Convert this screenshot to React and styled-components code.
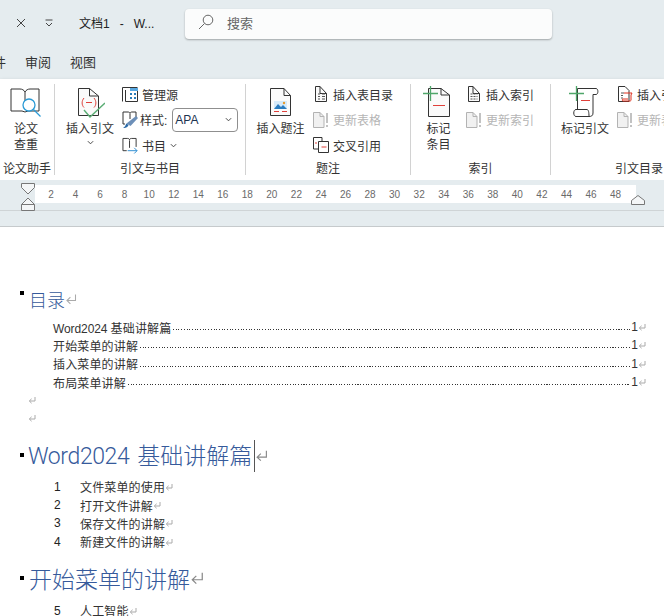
import styled, { createGlobalStyle } from "styled-components";

const GlobalStyle = createGlobalStyle`
  html, body { margin: 0; padding: 0; background: #fff; }
  body { font-family: "Liberation Sans", "Noto Sans CJK SC", sans-serif; }
`;

const Window = styled.div`
  width: 664px;
  height: 616px;
  overflow: hidden;
  background: #fff;
  color: #262626;
`;

const TitleBar = styled.div`
  height: 46px;
  background: #e5ecef;
  display: flex;
  align-items: center;
  padding-left: 15px;
  box-sizing: border-box;
`;

const QuickBtn = styled.span`
  width: ${(p) => p.$w}px;
  display: flex;
`;

const DocTitle = styled.span`
  width: 106px;
  flex: none;
  padding-bottom: 2px;
  font-size: 12px;
  white-space: pre;
  color: #222;
`;

const SearchBox = styled.div`
  width: 367px;
  height: 30px;
  margin-top: 2px;
  padding: 0 0 4px 13px;
  background: #fbfcfc;
  border-radius: 4px;
  box-shadow: 0 1px 2px rgba(0, 0, 0, 0.3);
  display: flex;
  align-items: center;
  gap: 13px;
  box-sizing: border-box;
  font-size: 13px;
  color: #666;
`;

const Tabs = styled.div`
  height: 33px;
  padding-bottom: 2px;
  box-sizing: border-box;
  background: #e5ecef;
  display: flex;
  align-items: center;
  gap: 19px;
  margin-left: -20px;
  font-size: 13px;
  color: #333;
`;

const Ribbon = styled.div`
  position: relative;
  height: 101px;
  background: #fff;
  display: flex;
  box-shadow: 0 2px 4px rgba(0, 0, 0, 0.25);
`;

const Group = styled.div`
  flex: none;
  width: ${(p) => p.$w}px;
  box-sizing: border-box;
  margin: 5px 0;
  height: 91px;
  border-right: ${(p) => (p.$last ? "none" : "1px solid #d2d2d2")};
  display: flex;
  flex-direction: column;
`;

const GroupBody = styled.div`
  height: 79px;
  display: flex;
  padding-left: ${(p) => p.$pad || 0}px;
`;

const GroupLabel = styled.div`
  font-size: 12px;
  line-height: 12px;
  text-align: center;
  white-space: nowrap;
  color: #333;
`;

const LargeBtn = styled.div`
  flex: none;
  width: ${(p) => p.$w}px;
  display: flex;
  flex-direction: column;
  align-items: center;
  padding-top: 4px;
  font-size: 12px;
  line-height: 16px;
  text-align: center;
  color: #333;
  svg { display: block; }
`;

const LargeIcon = styled.div`
  height: ${(p) => (p.$up ? 32 : 30)}px;
  margin: ${(p) => (p.$up ? -2 : 0)}px 0 3px;
`;

const BtnChevron = styled.span`
  margin-top: 2px;
`;

const SmallCol = styled.div`
  display: flex;
  flex-direction: column;
  gap: 3.7px;
  margin-top: -1px;
`;

const SmallRow = styled.div`
  height: 22px;
  display: flex;
  align-items: center;
  gap: ${(p) => p.$gap ?? 4}px;
  font-size: 12px;
  white-space: nowrap;
  color: ${(p) => (p.$off ? "#b5b5b5" : "#333")};
`;

const SmallIcon = styled.span`
  width: 16px;
  height: 18px;
  display: flex;
  align-items: center;
  justify-content: center;
  flex: none;
`;

const StyleSelect = styled.div`
  width: 66px;
  height: 24px;
  margin: 1px 0 0 3px;
  box-sizing: border-box;
  border: 1px solid #8f8f8f;
  border-radius: 4px;
  display: flex;
  align-items: center;
  justify-content: space-between;
  padding: 0 5px 1px 2px;
  font-size: 12px;
  color: #1c3350;
`;

const RulerArea = styled.div`
  position: relative;
  height: 31px;
  background: #e5ecef;
  padding-top: 5px;
  box-sizing: border-box;
  border-bottom: 1px solid #cfd4d6;
`;

const RulerTrack = styled.div`
  width: 601px;
  height: 18px;
  margin-left: 35px;
  background: #fff;
  display: flex;
  align-items: center;
  padding-left: 3.7px;
  box-sizing: border-box;
`;

const RulerNum = styled.span`
  flex: none;
  width: 24.55px;
  text-align: center;
  font-size: 10px;
  color: #6a6a6a;
`;

const LeftMarker = styled.svg`
  position: absolute;
  left: 21px;
  top: 3px;
`;

const RightMarker = styled.svg`
  position: absolute;
  left: 631px;
  top: 15px;
`;

const RulerGap = styled.div`
  height: 15px;
  background: #e5ecef;
  border-bottom: 1px solid #c6cacc;
`;

const Page = styled.div`
  padding: 60px 0 0 20px;
  color: #333;
`;

const Heading = styled.div`
  display: flex;
  align-items: center;
  height: ${(p) => p.$h}px;
  margin-top: ${(p) => p.$mt || 0}px;
  font-size: ${(p) => p.$size}px;
  color: #365a9b;
  font-weight: 300;
  white-space: nowrap;
`;

const Bullet = styled.span`
  flex: none;
  align-self: flex-start;
  width: 4px;
  height: 4px;
  background: #000;
  margin: ${(p) => p.$top}px ${(p) => p.$gap}px 0 0;
`;

const Caret = styled.span`
  width: 1px;
  height: 32px;
  background: #555;
  margin: 0 0 0 2px;
`;

const HeadingText = styled.span`
  padding-bottom: 3px;
`;

const HeadingLatin = styled.span`
  font-family: Roboto, "Liberation Sans", sans-serif;
  font-weight: 300;
  letter-spacing: -0.4px;
  margin-right: 8px;
`;

const TocLatin = styled.span`
  letter-spacing: -0.1px;
`;

const TocList = styled.div`
  margin: 7px 0 -0.6px 33px;
`;

const TocRow = styled.div`
  height: 18.3px;
  display: flex;
  align-items: center;
  padding-right: 18px;
  font-size: 12px;
  letter-spacing: 0.15px;
  white-space: nowrap;
`;

const Leader = styled.span`
  flex: 1;
  height: 1px;
  margin: 5px 1px 0 2px;
  background: repeating-linear-gradient(90deg, #333 0 1px, transparent 1px 2.7px);
`;

const Blank = styled.div`
  height: 18.5px;
  display: flex;
  align-items: center;
  padding-left: 8px;
`;

const NumList = styled.div`
  margin: ${(p) => p.$mt}px 0 0 34px;
`;

const NumRow = styled.div`
  height: 18.3px;
  display: flex;
  align-items: center;
  font-size: 12px;
  letter-spacing: 0.15px;
  white-space: nowrap;
`;

const NumIndex = styled.span`
  width: 26px;
  flex: none;
  color: #222;
`;

const Mark = styled.svg`
  flex: none;
`;

const ReturnMark = ({ size = 8, color = "#aaa" }) => (
  <Mark width={size} height={size} viewBox="0 0 8 8" fill="none" stroke={color} strokeWidth={size > 10 ? 0.7 : 1}>
    <path d="M7 1v4H1.500M3.600 2.800 1.300 5l2.300 2.200" />
  </Mark>
);

const Chevron = ({ size = 7, color = "#444" }) => (
  <svg width={size} height={size} viewBox="0 0 8 8" fill="none" stroke={color} strokeWidth="1.1">
    <path d="M1 2.500 4 5.500 7 2.500" />
  </svg>
);

const Doc = ({ w = 21, h = 28, children, stroke = "#333", fill = "#fafafa" }) => (
  <svg width={w} height={h} viewBox={`0 0 ${w} ${h}`} fill="none">
    <path d={`M.5.5H${w - 7}L${w - 0.5} 7.500V${h - 0.5}H.5Z`} fill={fill} stroke={stroke} />
    <path d={`M${w - 7} .5V7.500H${w - 0.5}`} stroke={stroke} />
    {children}
  </svg>
);

const BookSearchIcon = () => (
  <svg width="32" height="30" viewBox="0 0 32 30" fill="none">
    <path d="M1 1h9c2 0 4 1 5 3 1-2 3-3 5-3h9v22H18l-3 1-3-1H1Z" fill="#fff" stroke="#333" />
    <path d="M15 4v10" stroke="#333" />
    <circle cx="19" cy="17" r="6" fill="#fff" stroke="#2a9ad6" strokeWidth="1.300" />
    <path d="m23.500 21.500 7 7" stroke="#2a9ad6" strokeWidth="1.200" />
  </svg>
);

const CiteIcon = () => (
  <svg width="30" height="30" viewBox="-3 0 30 30" fill="none">
    <path d="M.5.5H11.500L20.500 8V27.500H.5Z" fill="#fafafa" stroke="#333" />
    <path d="M11.500 .5V8H20.500" stroke="#333" />
    <path d="M6 10c-2.500 3-2.500 7 0 9.500M16 10c2.500 3 2.500 7 0 9.500M8 14.500h6" stroke="#e0403a" />
    <path d="m6 22 6 7L27 15" stroke="#5aad74" strokeWidth="1.400" />
  </svg>
);

const SourcesIcon = () => (
  <svg width="16" height="15" viewBox="0 0 16 15" fill="none">
    <path d="M.5 14.500V.5h15" stroke="#333" />
    <path d="M3.500 14.500H9M3.500 3V14.500" stroke="#333" />
    <path d="M8 1h8v3H8Z" fill="#59a8e0" />
    <path d="M15.500 4v10.500H9" stroke="#333" />
    <path d="M8 6h2v2H8ZM8 10h2v2H8ZM12 6h2v2h-2ZM12 10h2v2h-2Z" fill="#2b7cb8" />
  </svg>
);

const BrushIcon = () => (
  <svg width="16" height="18" viewBox="0 0 16 18" fill="none">
    <path d="M1 1h5c1 0 2 .5 2 1.500C8 1.500 9 1 10 1h4v5M8 3v5M1 1v12h2" stroke="#333" />
    <path d="M4.500 12.500 14 5l2 2-7.500 8Z" fill="#6c8fb8" />
    <path d="M1 17c2 0 5-.5 5.500-3l-2-1.500c-1 1-1 3.500-3.500 4.500Z" fill="#2a6aa8" />
  </svg>
);

const BibIcon = () => (
  <svg width="17" height="17" viewBox="0 0 17 17" fill="none">
    <path d="M1 1h5c1 0 2 .5 2 1.500C8 1.500 9 1 10 1h5v9M8 3v8M1 1v13h4" stroke="#333" />
    <path d="M6 14h10M13 11l3 3-3 3" stroke="#2a8bd0" />
  </svg>
);

const CaptionIcon = () => (
  <Doc>
    <path d="M4 13h13v8H4Z" fill="#d6eafa" />
    <path d="m4 21 4-5 3 3 2-2 4 4Z" fill="#2a7cc0" />
    <circle cx="14" cy="15" r="1.200" fill="#e89a2c" />
    <path d="M4 23.500h5M12 23.500h5" stroke="#e0403a" />
  </Doc>
);

const TableListIcon = () => (
  <Doc w={12} h={16}>
    <path d="M3 8h2M7 8h3M3 10.500h2M7 10.500h3M3 13h2M7 13h3" stroke="#555" />
  </Doc>
);

const UpdateIcon = () => (
  <svg width="16" height="16" viewBox="0 0 16 16" fill="none">
    <path d="M.5.5H7L11 4.500V15.500H.5Z" fill="#f1f1f1" stroke="#b3b3b3" />
    <path d="M7 .5V4.500H11" stroke="#b3b3b3" />
    <path d="M14 1v10M14 13v2" stroke="#b3b3b3" strokeWidth="1.600" />
  </svg>
);

const CrossRefIcon = () => (
  <svg width="16" height="16" viewBox="0 0 16 16" fill="none">
    <path d="M5 12H.5V.5H9V4" stroke="#333" />
    <path d="M5.500 4.500H15.500V15.500H5.500Z" fill="#fff" stroke="#333" />
    <path d="M8.500 10h5M2 6h2" stroke="#e0403a" />
  </svg>
);

const MarkEntryIcon = () => (
  <svg width="31" height="32" viewBox="0 0 31 32" fill="none">
    <path d="M5.500 2.500H18L26.500 9V30.500H5.500Z" fill="#fafafa" stroke="#333" />
    <path d="M18 2.500V9H26.500" stroke="#333" />
    <path d="M10 19.500h12" stroke="#e0403a" />
    <path d="M0 7.500h15M7.500 0v15" stroke="#4fa66a" strokeWidth="1.300" />
  </svg>
);

const IndexIcon = () => (
  <Doc w={12} h={16}>
    <path d="M2.500 8H9.500M2.500 10.500H9.500M2.500 13H9.500" stroke="#555" strokeDasharray="2 1" />
  </Doc>
);

const ScrollIcon = () => (
  <svg width="32" height="32" viewBox="0 0 32 32" fill="none">
    <path d="M8.500 2.500H27c2.500 0 2.500 6 0 6h-3V27c0 3-2 3.500-4 3.500H7c-3 0-3-7 0-7h11c1.500 0 2 3 2 7M8.500 2.500V23.500" stroke="#333" fill="#fff" />
    <path d="M12 14.500h9" stroke="#e0403a" />
    <path d="M0 7.500h15M7.500 0v15" stroke="#4fa66a" strokeWidth="1.300" />
  </svg>
);

const TocaIcon = () => (
  <svg width="15" height="16" viewBox="0 0 15 16" fill="none">
    <path d="M.5.5H7L11 4.500V15.500H.5Z" fill="#fff" stroke="#333" />
    <path d="M3 7h3M3 9.500h2M3 12h2" stroke="#555" />
    <path d="M6 7h8l-1 2v5c0 1-1 1-1 1H5c-1 0-1-2 0-2h5" stroke="#e0301e" />
  </svg>
);

const rulerNums = Array.from({ length: 24 }, (_, i) => (i + 1) * 2);
const tocRows = ["基础讲解篇", "开始菜单的讲解", "插入菜单的讲解", "布局菜单讲解"];
const firstList = ["文件菜单的使用", "打开文件讲解", "保存文件的讲解", "新建文件的讲解"];

export default function App() {
  return (
    <Window>
      <GlobalStyle />
      <TitleBar>
        <QuickBtn $w={29}>
          <svg width="12" height="12" viewBox="0 0 12 12" stroke="#444" fill="none">
            <path d="m2 2 8 8M10 2l-8 8" />
          </svg>
        </QuickBtn>
        <QuickBtn $w={35}>
          <svg width="10" height="10" viewBox="0 0 10 10" stroke="#444" fill="none">
            <path d="M1.500 2h7M2 5l3 3 3-3" />
          </svg>
        </QuickBtn>
        <DocTitle>文档1   -   W...</DocTitle>
        <SearchBox>
          <svg width="16" height="16" viewBox="0 0 16 16" stroke="#666" fill="none">
            <circle cx="10" cy="6" r="4.800" />
            <path d="M6.500 9.500 1 15" />
          </svg>
          搜索
        </SearchBox>
      </TitleBar>
      <Tabs>
        <span>文件</span>
        <span>审阅</span>
        <span>视图</span>
      </Tabs>
      <Ribbon>
        <Group $w={55}>
          <GroupBody>
            <LargeBtn $w={52}>
              <LargeIcon><BookSearchIcon /></LargeIcon>
              论文<br />查重
            </LargeBtn>
          </GroupBody>
          <GroupLabel>论文助手</GroupLabel>
        </Group>
        <Group $w={191}>
          <GroupBody $pad={3}>
            <LargeBtn $w={64}>
              <LargeIcon><CiteIcon /></LargeIcon>
              插入引文
              <BtnChevron><Chevron /></BtnChevron>
            </LargeBtn>
            <SmallCol>
              <SmallRow>
                <SmallIcon><SourcesIcon /></SmallIcon>管理源
              </SmallRow>
              <SmallRow $gap={2}>
                <SmallIcon><BrushIcon /></SmallIcon>样式:
                <StyleSelect>APA<Chevron /></StyleSelect>
              </SmallRow>
              <SmallRow>
                <SmallIcon><BibIcon /></SmallIcon>书目
                <Chevron />
              </SmallRow>
            </SmallCol>
          </GroupBody>
          <GroupLabel>引文与书目</GroupLabel>
        </Group>
        <Group $w={165}>
          <GroupBody $pad={2}>
            <LargeBtn $w={65}>
              <LargeIcon><CaptionIcon /></LargeIcon>
              插入题注
            </LargeBtn>
            <SmallCol>
              <SmallRow><SmallIcon><TableListIcon /></SmallIcon>插入表目录</SmallRow>
              <SmallRow $off><SmallIcon><UpdateIcon /></SmallIcon>更新表格</SmallRow>
              <SmallRow><SmallIcon><CrossRefIcon /></SmallIcon>交叉引用</SmallRow>
            </SmallCol>
          </GroupBody>
          <GroupLabel>题注</GroupLabel>
        </Group>
        <Group $w={140}>
          <GroupBody>
            <LargeBtn $w={55}>
              <LargeIcon $up><MarkEntryIcon /></LargeIcon>
              标记<br />条目
            </LargeBtn>
            <SmallCol>
              <SmallRow><SmallIcon><IndexIcon /></SmallIcon>插入索引</SmallRow>
              <SmallRow $off><SmallIcon><UpdateIcon /></SmallIcon>更新索引</SmallRow>
            </SmallCol>
          </GroupBody>
          <GroupLabel>索引</GroupLabel>
        </Group>
        <Group $w={176} $last>
          <GroupBody $pad={2}>
            <LargeBtn $w={64}>
              <LargeIcon $up><ScrollIcon /></LargeIcon>
              标记引文
            </LargeBtn>
            <SmallCol>
              <SmallRow><SmallIcon><TocaIcon /></SmallIcon>插入引文目录</SmallRow>
              <SmallRow $off><SmallIcon><UpdateIcon /></SmallIcon>更新表格</SmallRow>
            </SmallCol>
          </GroupBody>
          <GroupLabel>引文目录</GroupLabel>
        </Group>
      </Ribbon>
      <RulerArea>
        <LeftMarker width="14" height="28" viewBox="0 0 14 28" fill="#f4f6f7" stroke="#777">
          <path d="M.5.5h13v4L7 11 .5 4.500Z" />
          <path d="M7 15l6.500 6.500v6H.5v-6Z" />
          <path d="M.5 21.500h13" />
        </LeftMarker>
        <RulerTrack>
          {rulerNums.map((n) => (
            <RulerNum key={n}>{n}</RulerNum>
          ))}
        </RulerTrack>
        <RightMarker width="14" height="10" viewBox="0 0 14 10" fill="#f4f6f7" stroke="#777">
          <path d="M7 .5 13.500 5.500v4H.5v-4Z" />
        </RightMarker>
      </RulerArea>
      <RulerGap />
      <Page>
        <Heading $h={24} $size={18}>
          <Bullet $top={4} $gap={5} />
          目录<ReturnMark size={12} />
        </Heading>
        <TocList>
          {tocRows.map((t, i) => (
            <TocRow key={t}>
              <span>
                {i === 0 && <TocLatin>Word2024 </TocLatin>}
                {t}
              </span>
              <Leader />
              1<ReturnMark />
            </TocRow>
          ))}
        </TocList>
        <Blank><ReturnMark /></Blank>
        <Blank><ReturnMark /></Blank>
        <Heading $h={34} $mt={11} $size={23}>
          <Bullet $top={14} $gap={4} />
          <HeadingText>
            <HeadingLatin>Word2024</HeadingLatin>基础讲解篇
          </HeadingText>
          <Caret />
          <ReturnMark size={13} color="#888" />
        </Heading>
        <NumList $mt={5}>
          {firstList.map((t, i) => (
            <NumRow key={t}>
              <NumIndex>{i + 1}</NumIndex>
              {t}<ReturnMark />
            </NumRow>
          ))}
        </NumList>
        <Heading $h={32} $mt={11.5} $size={23}>
          <Bullet $top={14} $gap={5} />
          开始菜单的讲解<ReturnMark size={14} color="#888" />
        </Heading>
        <NumList $mt={7.5}>
          <NumRow>
            <NumIndex>5</NumIndex>
            人工智能<ReturnMark />
          </NumRow>
        </NumList>
      </Page>
    </Window>
  );
}
